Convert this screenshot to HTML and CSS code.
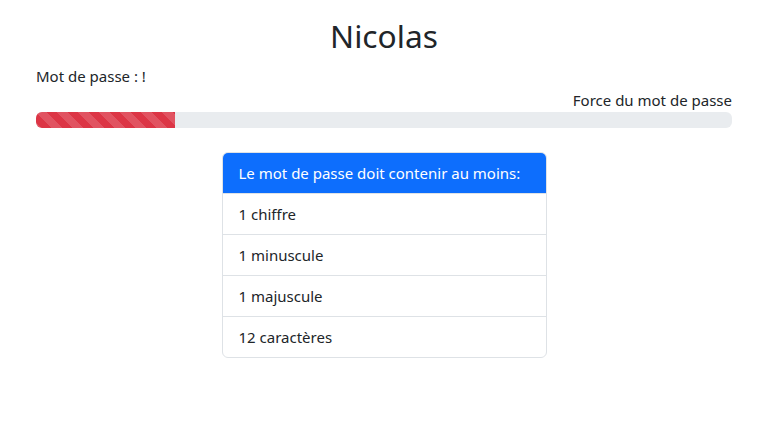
FILE: index.html
```html
<!DOCTYPE html>
<html lang="fr">
<head>
<meta charset="utf-8">
<title>Nicolas</title>
<link rel="stylesheet" href="styles.css">
</head>
<body>
<div class="container">
  <h1 class="title">Nicolas</h1>
  <p class="label">Mot de passe : !</p>
  <div class="strength-label">Force du mot de passe</div>
  <div class="progress">
    <div class="progress-bar" style="width: 20%"></div>
  </div>
  <div class="card">
    <div class="card-header">Le mot de passe doit contenir au moins:</div>
    <ul class="list">
      <li class="item">1 chiffre</li>
      <li class="item">1 minuscule</li>
      <li class="item">1 majuscule</li>
      <li class="item">12 caractères</li>
    </ul>
  </div>
</div>
</body>
</html>
```
FILE: styles.css
```css
* { box-sizing: border-box; }
body {
  margin: 0;
  font-family: "Noto Sans", "Open Sans", sans-serif;
  font-size: 15px;
  line-height: 24px;
  color: #212529;
  background: #fff;
}
.container {
  width: 720px;
  margin: 16px auto 0;
  padding: 0 12px;
}
.title {
  margin: 0 0 8px;
  font-size: 31.7px;
  font-weight: 400;
  line-height: 40px;
  text-align: center;
}
.label { margin: 0; }
.strength-label { text-align: right; }
.progress {
  height: 16px;
  background: #e9ecef;
  border-radius: 6px;
  overflow: hidden;
  display: flex;
}
.progress-bar {
  background-color: #dc3545;
  background-image: linear-gradient(45deg, rgba(255,255,255,.15) 25%, transparent 25%, transparent 50%, rgba(255,255,255,.15) 50%, rgba(255,255,255,.15) 75%, transparent 75%, transparent);
  background-size: 21px 21px;
}
.card {
  width: 325px;
  margin: 24px auto 0;
  border: 1px solid #dee2e6;
  border-radius: 6px;
  overflow: hidden;
}
.card-header {
  background: #0d6efd;
  color: #fff;
  padding: 8px 16px;
  white-space: nowrap;
  border-bottom: 1px solid #dee2e6;
}
.list { list-style: none; margin: 0; padding: 0; }
.item {
  padding: 8px 16px;
  border-bottom: 1px solid #dee2e6;
}
.item:last-child { border-bottom: 0; }
```
